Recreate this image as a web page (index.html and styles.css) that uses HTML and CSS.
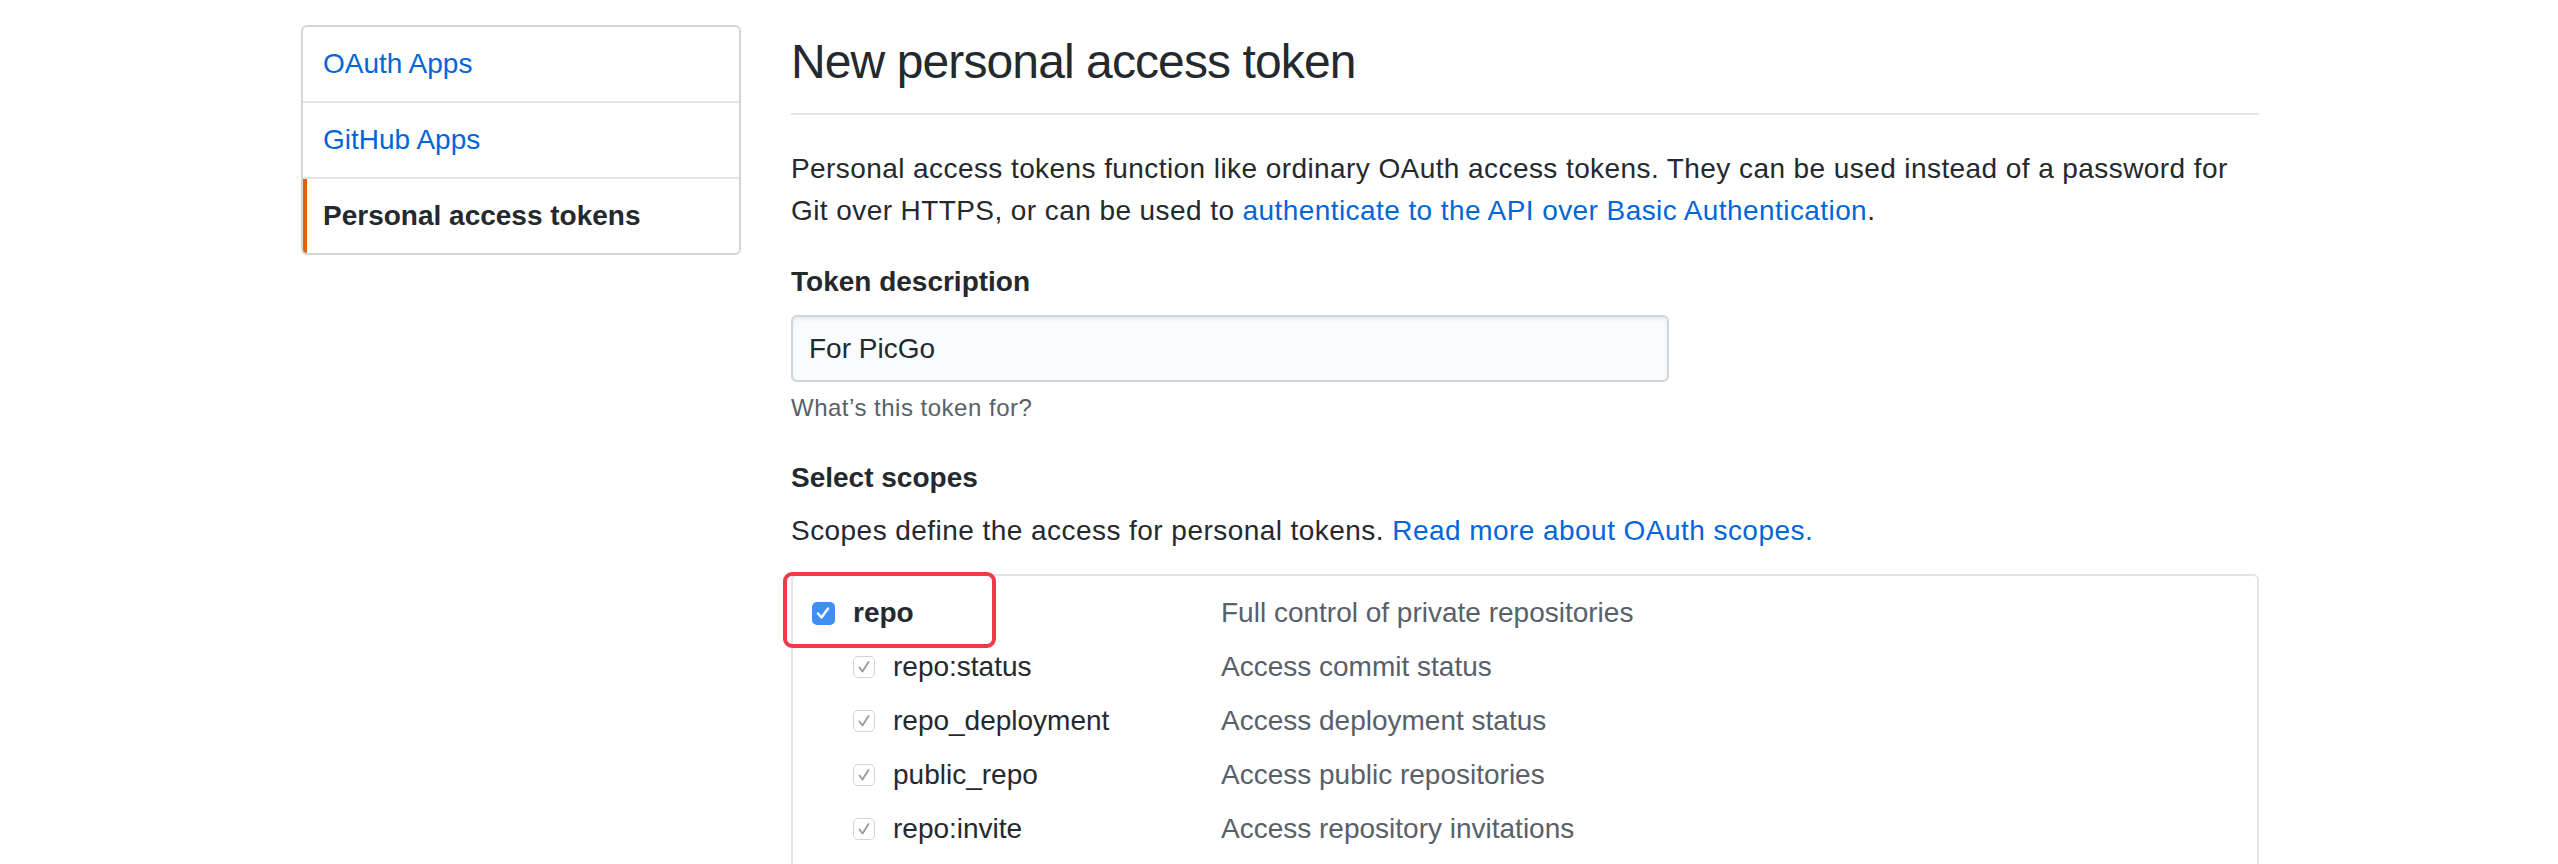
FILE: index.html
```html
<!DOCTYPE html>
<html lang="en">
<head>
<meta charset="utf-8">
<title>New personal access token</title>
<link rel="stylesheet" href="styles.css">
</head>
<body>
<div class="container">
  <nav class="menu">
    <a class="menu-item" href="#">OAuth Apps</a>
    <a class="menu-item" href="#">GitHub Apps</a>
    <a class="menu-item selected" href="#">Personal access tokens</a>
  </nav>
  <main class="main">
    <h2 class="subhead">New personal access token</h2>
    <p class="intro">Personal access tokens function like ordinary OAuth access tokens. They can be used instead of a password for Git over HTTPS, or can be used to <a href="#">authenticate to the API over Basic Authentication</a>.</p>
    <dl class="form-group">
      <dt class="label">Token description</dt>
      <dd>
        <input class="form-control" type="text" value="For PicGo">
        <p class="note">What’s this token for?</p>
      </dd>
    </dl>
    <h3 class="label scopes-title">Select scopes</h3>
    <p class="scopes-text">Scopes define the access for personal tokens. <a href="#">Read more about OAuth scopes.</a></p>
    <div class="scope-box">
      <div class="scope-row parent">
        <span class="scope-name"><span class="cb cb-on"><svg viewBox="0 0 22 22" width="22" height="22"><path d="M6 11.5l3.5 4L16 6.5" fill="none" stroke="#fff" stroke-width="2.4" stroke-linecap="round" stroke-linejoin="round"/></svg></span><b>repo</b></span>
        <span class="scope-desc">Full control of private repositories</span>
        <span class="highlight"></span>
      </div>
      <div class="scope-row child">
        <span class="scope-name"><span class="cb cb-dis"><svg viewBox="0 0 22 22" width="22" height="22"><path d="M6.5 11.5l3 4L15.5 6" fill="none" stroke="#9a9a9a" stroke-width="1.8" stroke-linecap="round" stroke-linejoin="round"/></svg></span>repo:status</span>
        <span class="scope-desc">Access commit status</span>
      </div>
      <div class="scope-row child">
        <span class="scope-name"><span class="cb cb-dis"><svg viewBox="0 0 22 22" width="22" height="22"><path d="M6.5 11.5l3 4L15.5 6" fill="none" stroke="#9a9a9a" stroke-width="1.8" stroke-linecap="round" stroke-linejoin="round"/></svg></span>repo_deployment</span>
        <span class="scope-desc">Access deployment status</span>
      </div>
      <div class="scope-row child">
        <span class="scope-name"><span class="cb cb-dis"><svg viewBox="0 0 22 22" width="22" height="22"><path d="M6.5 11.5l3 4L15.5 6" fill="none" stroke="#9a9a9a" stroke-width="1.8" stroke-linecap="round" stroke-linejoin="round"/></svg></span>public_repo</span>
        <span class="scope-desc">Access public repositories</span>
      </div>
      <div class="scope-row child">
        <span class="scope-name"><span class="cb cb-dis"><svg viewBox="0 0 22 22" width="22" height="22"><path d="M6.5 11.5l3 4L15.5 6" fill="none" stroke="#9a9a9a" stroke-width="1.8" stroke-linecap="round" stroke-linejoin="round"/></svg></span>repo:invite</span>
        <span class="scope-desc">Access repository invitations</span>
      </div>
    </div>
  </main>
</div>
</body>
</html>
```
FILE: styles.css
```css
html, body {
  margin: 0;
  padding: 0;
  background: #fff;
}
body {
  font-family: "Liberation Sans", Arial, Helvetica, sans-serif;
  font-size: 28px;
  line-height: 42px;
  color: #24292e;
  overflow: hidden;
  height: 864px;
}
a {
  color: #0366d6;
  text-decoration: none;
}
.container {
  display: flex;
  align-items: flex-start;
  padding: 25px 0 0 301px;
  gap: 50px;
}
.menu {
  width: 440px;
  box-sizing: border-box;
  border: 2px solid #d1d5da;
  border-radius: 6px;
  display: flex;
  flex-direction: column;
  overflow: hidden;
}
.menu-item {
  display: block;
  height: 74px;
  padding: 0 20px;
  line-height: 74px;
  border-bottom: 2px solid #e1e4e8;
}
.menu-item:last-child {
  border-bottom: 0;
}
.menu-item.selected {
  color: #24292e;
  font-weight: bold;
  border-left: 4px solid #e36209;
  padding-left: 16px;
  cursor: default;
}
.main {
  width: 1468px;
}
.subhead {
  margin: 7px 0 0;
  padding-bottom: 21px;
  border-bottom: 2px solid #e1e4e8;
  font-size: 48px;
  line-height: 60px;
  font-weight: normal;
  letter-spacing: -0.9px;
}
.intro {
  margin: 33px 0 0;
  max-width: 1452px;
  letter-spacing: 0.42px;
}
.form-group {
  margin: 29px 0 0;
}
.form-group dd {
  margin: 0;
}
.label {
  display: block;
  font-weight: bold;
  font-size: 28px;
  line-height: 42px;
  margin: 0;
}
.form-control {
  display: block;
  box-sizing: border-box;
  width: 878px;
  height: 67px;
  margin-top: 12px;
  padding: 0 16px;
  font-family: inherit;
  font-size: 28px;
  color: #24292e;
  background: #fafbfc;
  border: 2px solid #d1d5da;
  border-radius: 6px;
  box-shadow: inset 0 2px 4px rgba(27,31,35,0.075);
  outline: none;
}
.note {
  margin: 8px 0 0;
  font-size: 24px;
  line-height: 36px;
  color: #586069;
  letter-spacing: 0.5px;
}
.scopes-title {
  margin-top: 31px;
}
.scopes-text {
  margin: 11px 0 0;
  letter-spacing: 0.45px;
}
.scope-box {
  margin-top: 22px;
  border: 2px solid #e1e4e8;
  border-radius: 6px;
  padding: 10px 0 0 19px;
  height: 400px;
}
.scope-row {
  position: relative;
  display: grid;
  grid-template-columns: 409px 1fr;
  align-items: center;
  height: 54px;
}
.scope-name {
  display: flex;
  align-items: center;
  gap: 18px;
}
.child .scope-name {
  padding-left: 41px;
}
.scope-desc {
  color: #586069;
}
.cb {
  display: inline-flex;
  width: 22px;
  height: 22px;
  box-sizing: border-box;
  border-radius: 5px;
  flex: none;
}
.cb svg {
  display: block;
}
.cb-on {
  background: #3f8ff2;
  width: 23px;
  height: 23px;
}
.cb-dis {
  background: #fff;
  border: 1.5px solid #d4d4d4;
}
.cb-dis svg {
  margin: -1.5px;
}
.highlight {
  position: absolute;
  left: -29px;
  top: -14px;
  width: 213px;
  height: 76px;
  box-sizing: border-box;
  border: 4px solid #f03a4a;
  border-radius: 9px;
  pointer-events: none;
}
```
